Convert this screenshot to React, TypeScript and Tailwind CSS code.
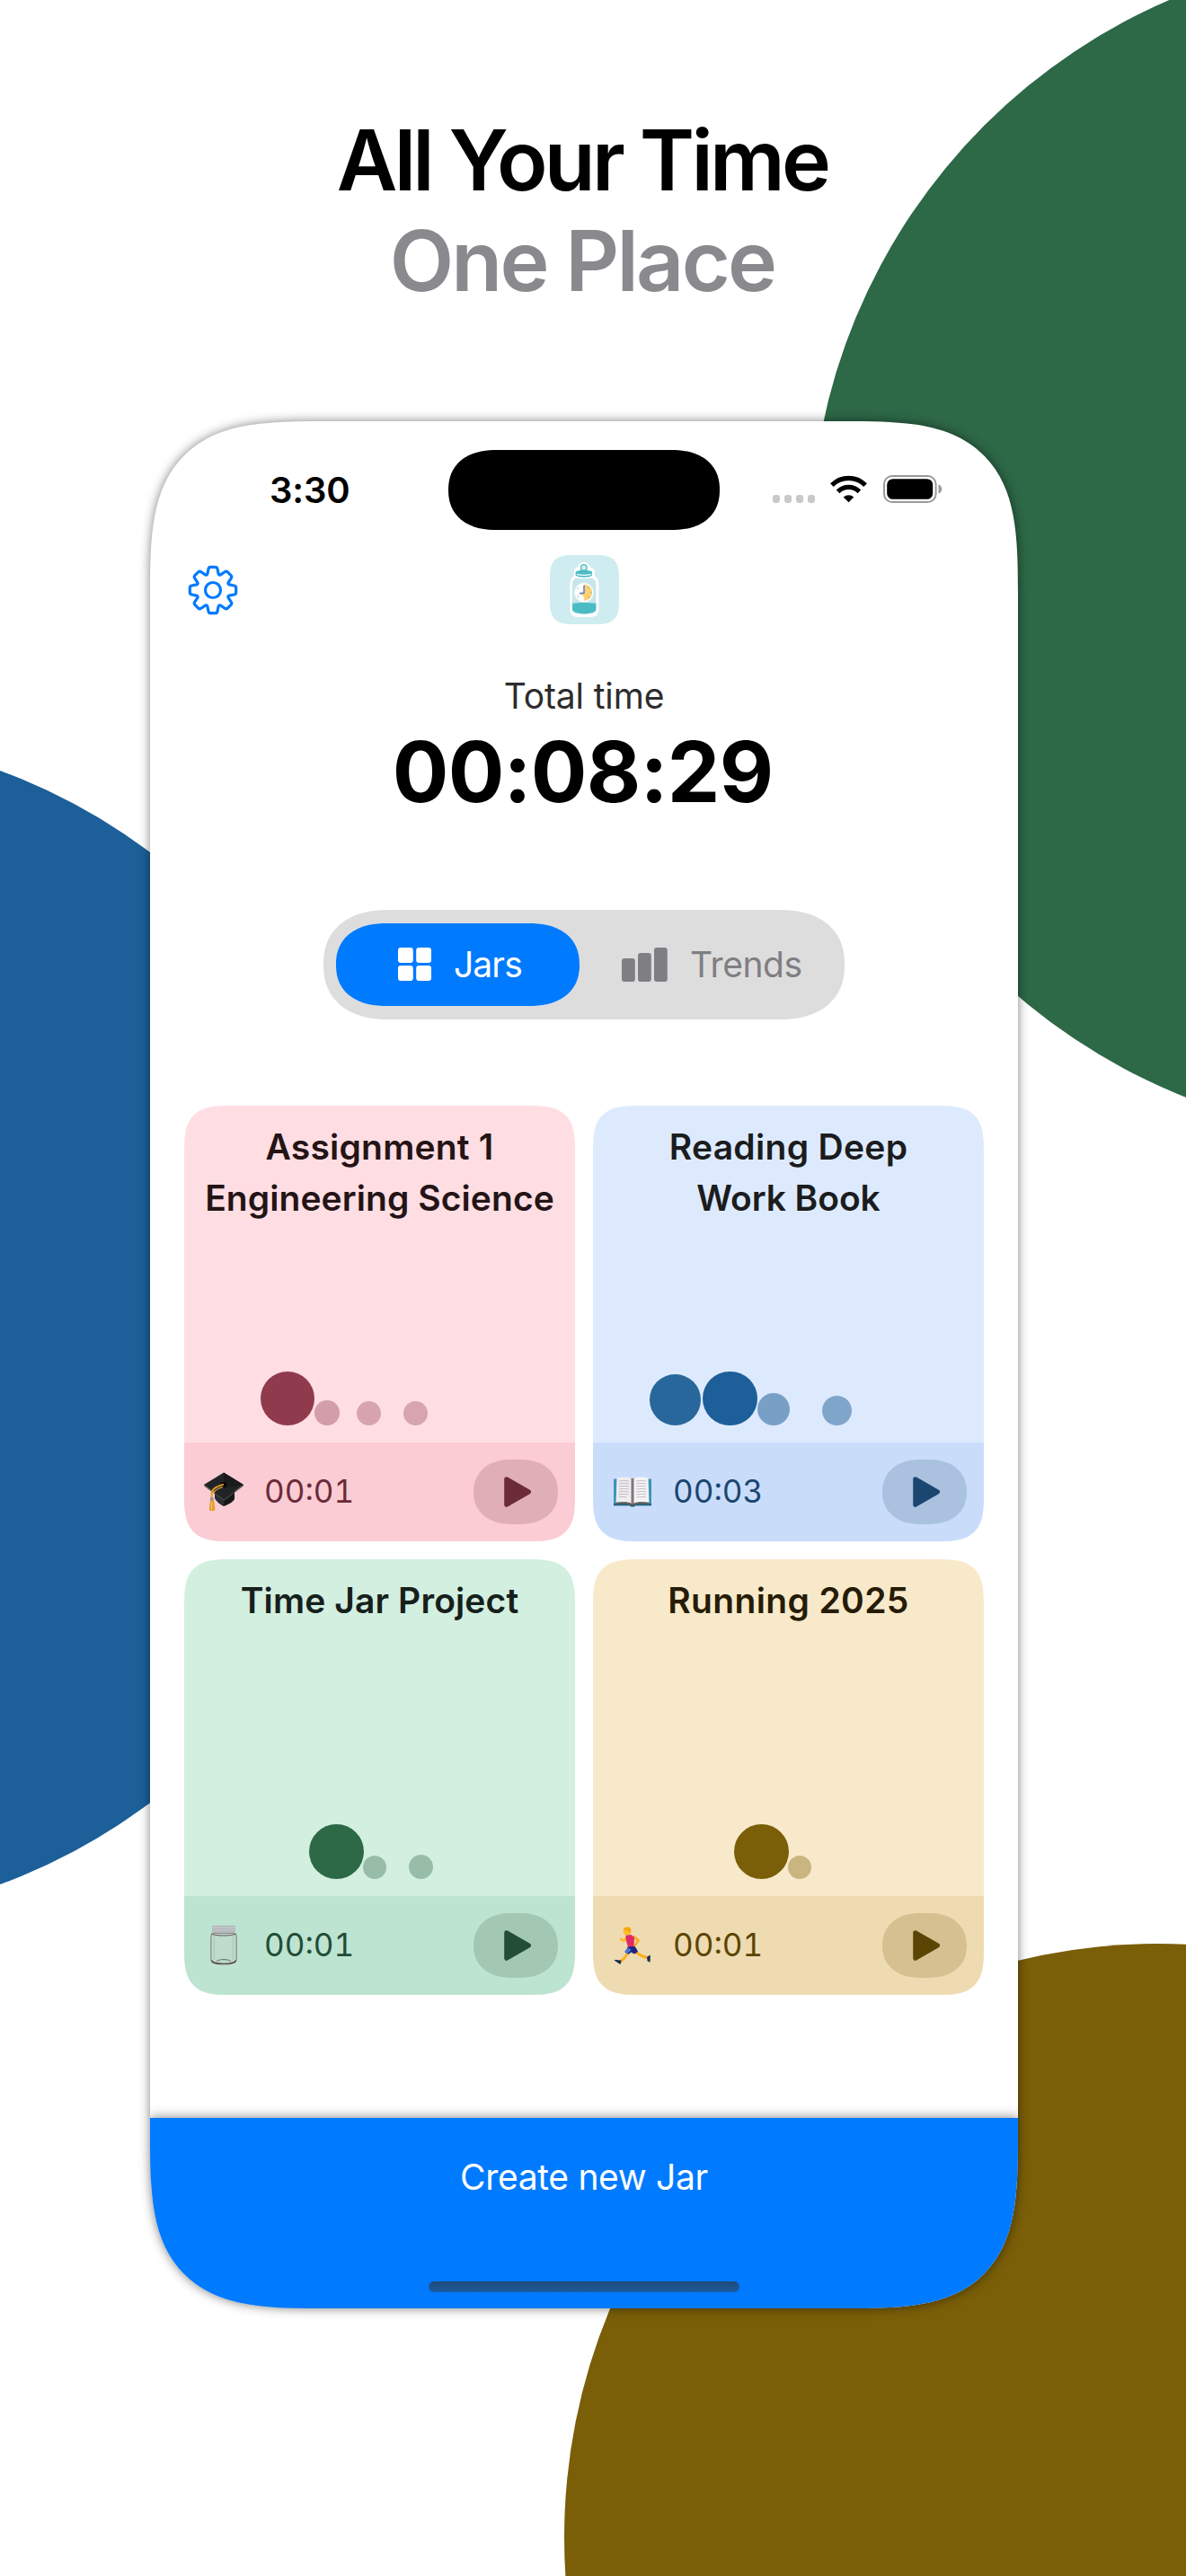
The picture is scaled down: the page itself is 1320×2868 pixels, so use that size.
import React from "react";

/** Outline of an eight-toothed cog, centred on the origin. */
function cogPath() {
  const parts: string[] = [];
  for (let i = 0; i < 8; i++) {
    const a = (i * Math.PI) / 4;
    const p = (x: number, y: number) =>
      `${(x * Math.cos(a) - y * Math.sin(a)).toFixed(2)} ${(x * Math.sin(a) + y * Math.cos(a)).toFixed(2)}`;
    parts.push(
      `${i === 0 ? "M" : "L"}${p(-6.1, -18.2)}`,
      `L${p(-5, -23.6)} Q${p(-4.6, -25.7)} ${p(-2.6, -25.7)}`,
      `L${p(2.6, -25.7)} Q${p(4.6, -25.7)} ${p(5, -23.6)}`,
      `L${p(6.1, -18.2)} Q${p(6.7, -16.2)} ${p(8.6, -17.2)}`
    );
  }
  return parts.join(" ") + "Z";
}

function GearIcon() {
  return (
    <svg width="58" height="58" viewBox="-29 -29 58 58" fill="none" stroke="#007aff" strokeWidth="3.2" strokeLinejoin="round">
      <path d={cogPath()} />
      <circle r="8.5" />
    </svg>
  );
}

function AppLogo() {
  return (
    <svg width="77" height="77" viewBox="0 0 77 77">
      <path d="M37.8 8c3.8 0 6.6 2.4 7 5.6 3 .6 5 2.400 5 5v4.600c3 2.200 4.600 4.600 4.600 8.300V61c0 5-3.600 8-8.600 8H31c-5 0-8.600-3-8.600-8V31.500c0-3.700 1.800-6.100 4.400-8.300v-4.600c0-2.600 1.400-4.400 4-5 .6-3.200 3.400-5.600 7-5.600Z" fill="#fff" />
      <circle cx="37.800" cy="14" r="3.300" fill="#cfecf0" stroke="#4cbcc4" strokeWidth="1.300" />
      <path d="M28.600 18.500c3-2.500 15-2.500 18.400 0v4c-3 3-15 3-18.400 0Z" fill="#4cbcc4" />
      <path d="M30 21.400c4 1.300 12 1.300 15.800 0" stroke="#fff" strokeWidth="1.400" fill="none" />
      <path d="M29 25.600c5 1 13 1 17.800 0 2.800 1.400 4.600 3.500 4.600 6.400v28c0 3.200-2.600 5-5.600 5H30.600c-3 0-5.600-1.800-5.600-5V32c0-2.900 1.400-5 4-6.400Z" fill="#c6e6ea" />
      <path d="M25 54c3-1.400 22-1.400 26.400 0v6.400c0 2.400-6 5-13.200 5S25 62.800 25 60.400Z" fill="#4cbcc4" />
      <circle cx="38" cy="41.700" r="10.600" fill="#fff" />
      <path d="M38 32.600a9.200 9.200 0 0 1 0 18.400v-4.600l-4.500-3.400 4.500-1.600Z" fill="#ffd077" />
      <g fill="#6fb9c6">
        <circle cx="31" cy="37" r=".7" /><circle cx="31.500" cy="46" r=".7" /><circle cx="43" cy="36" r=".7" />
        <circle cx="46" cy="41.500" r=".7" /><circle cx="43.600" cy="47" r=".7" />
      </g>
      <path d="M38 33.800v8.200l-5 .8" fill="none" stroke="#5c7bbf" strokeWidth="1.500" />
    </svg>
  );
}

function WifiIcon() {
  return (
    <svg width="41" height="31" viewBox="0 0 41 31" fill="none" stroke="#000">
      <path d="M1.900 11.100a26.400 26.400 0 0 1 37.200 0" strokeWidth="5.200" />
      <path d="M8.600 18.300a17 17 0 0 1 23.800 0" strokeWidth="5.200" />
      <path d="M20.500 30.300 14.700 24.500a8.300 8.300 0 0 1 11.600 0Z" fill="#000" stroke="none" />
    </svg>
  );
}

function BatteryIcon() {
  return (
    <svg width="66" height="31" viewBox="0 0 66 31">
      <rect x="1" y="1" width="57.600" height="29" rx="9" fill="none" stroke="#999" strokeWidth="2" />
      <rect x="4.200" y="4.200" width="51" height="22.600" rx="6.500" fill="#000" />
      <path d="M61.500 10.500c5 1.600 5 8.400 0 10Z" fill="#999" />
    </svg>
  );
}

function GridIcon() {
  return (
    <svg width="37" height="37" viewBox="0 0 37 37" fill="#fff">
      <rect width="16.800" height="17" rx="3" />
      <rect x="20.200" width="16.800" height="17" rx="3" />
      <rect y="20" width="16.800" height="17" rx="3" />
      <rect x="20.200" y="20" width="16.800" height="17" rx="3" />
    </svg>
  );
}

function BarsIcon() {
  return (
    <svg width="51" height="38" viewBox="0 0 51 38" fill="#7f7e83">
      <rect y="12" width="14.800" height="26" rx="3" />
      <rect x="18" y="6" width="14.800" height="32" rx="3" />
      <rect x="36" width="14.800" height="38" rx="3" />
    </svg>
  );
}

function CapEmoji() {
  return (
    <svg width="44" height="44" viewBox="0 0 44 44">
      <path d="M12 20v9c2 4 6 7 10 9 5-2 10-4 12-8v-11Z" fill="#17181a" />
      <path d="M12 22v6c2 4 5 7 10 9V26Z" fill="#2c2d30" />
      <path d="M22 .4 44 14 22 30.500 0 14Z" fill="#222325" />
      <path d="M0 14 22 30.500 44 14v1.300L22 32 0 15.300Z" fill="#47484a" />
      <path d="M22 .4 44 14 22 18Z" fill="#191a1b" />
      <ellipse cx="22" cy="14" rx="3.600" ry="3" fill="#090909" />
      <path d="M22 13.600C14 16 9.500 18 8.800 22.500L8.500 30" fill="none" stroke="#e29a22" strokeWidth="1.900" />
      <path d="M21 16.500C15 18.500 11 21 10.200 24" fill="none" stroke="#f4b94a" strokeWidth="1.100" />
      <path d="M7 31.500h4l1.400 10.500c-1.600 1.700-5 1.700-6.600 0Z" fill="#e39b25" />
      <path d="M8.600 33v9.500" stroke="#f7c763" strokeWidth="1.200" />
      <ellipse cx="8.800" cy="30" rx="2.100" ry="1.900" fill="#9a938a" />
    </svg>
  );
}

function BookEmoji() {
  return (
    <svg width="44" height="36" viewBox="0 0 44 36">
      <path d="M1 3.500h42v29.700H25c-.6 1.800-5.400 1.800-6 0H1Z" fill="#3d94b8" />
      <path d="M1 31h42v2.200H25c-.6 1.800-5.400 1.800-6 0H1Z" fill="#25647f" />
      <path d="M3.500 29.500h37l-.6 2.200c-6-.8-12-.6-16.600 1h-2.600c-4.600-1.600-10.600-1.800-16.600-1Z" fill="#6d5c52" />
      <path d="M4.500 2.500C10 1 17 1 22 3.200v28C17 28.600 9 28.600 3.600 29.800Z" fill="#efedef" />
      <path d="M39.500 2.500C34 1 27 1 22 3.200v28c5-2.600 13-2.600 18.400-1.400Z" fill="#f5f4f5" />
      <path d="M20.300 2.500 22 3.200l1.700-.7v28l-1.700.9-1.700-.9Z" fill="#9b979a" />
      <path d="M22 3v29" stroke="#5b5759" strokeWidth=".9" />
      <g stroke="#b4b0b8" strokeWidth=".8" fill="none">
        <path d="M7 6q6-1.200 11 0M7 9q6-1.200 11 0M7 12q6-1.200 11 0M6.800 15q6-1.200 11 0M6.800 18q6-1.200 11 0M6.600 21q6-1.200 11 0M6.600 24q5-1.200 9 0" />
        <path d="M26 6q6-1.200 11 0M26 9q6-1.200 11 0M26 12q6-1.200 11 0M26.200 15q6-1.200 11 0M26.200 18q6-1.200 11 0M26.400 21q6-1.200 11 0M26.400 24q6-1.200 11 0" />
      </g>
    </svg>
  );
}

function JarEmoji() {
  return (
    <svg width="44" height="45" viewBox="0 0 44 45">
      <path d="M9.500 9.500C8.300 10.500 7.800 12 7.800 14v24c0 4 2.500 6 14.200 6s14.200-2 14.200-6V14c0-2-.5-3.500-1.700-4.500Z" fill="#bddccb" stroke="#8f8687" strokeWidth="1.200" />
      <path d="M11.500 13v26M32.500 13v26" stroke="#acc6b9" strokeWidth="1.100" />
      <path d="M8.500 10.200c6 2.300 21 2.300 27 0" fill="none" stroke="#6b6463" strokeWidth="1.100" />
      <rect x="9" y=".8" width="26" height="8" rx="2.200" fill="#afb4b9" />
      <path d="M9.600 3.200h24.800M9.600 6h24.800" stroke="#cdd0d4" strokeWidth="1.200" />
      <path d="M8.600 39.500c1.500 5 25.300 5 26.800 0" fill="none" stroke="#4c4345" strokeWidth="1.200" />
      <path d="M14 40.500c3-2.500 13-2.500 16 0" fill="none" stroke="#6b6463" strokeWidth="1" />
    </svg>
  );
}

function RunnerEmoji() {
  return (
    <svg width="44" height="42" viewBox="0 0 44 42" fill="none" strokeLinecap="round" strokeLinejoin="round">
      <path d="M24 27.500 32 32.500 38 34.500" stroke="#fcae1c" strokeWidth="3" />
      <path d="M19 26 13 35 9 38.500" stroke="#fcb321" strokeWidth="3" />
      <path d="M24 11.500 28.500 15.500 24.500 21" stroke="#fbab1b" strokeWidth="2.800" />
      <path d="M16 11 12.500 16 9 14" stroke="#fdbb28" strokeWidth="2.600" />
      <path d="M14.500 9.500 20.500 9l3.500 3-.5 11.500-6 .5c-1.500-5-3.500-9-3-14.500Z" fill="#e12a68" />
      <path d="M16.500 22.500 24.500 22c1.500 2 3 4 3.500 6l-4 2.500-3.500-2-3 2.500-3-3Z" fill="#1e2586" />
      <path d="M17 23l-4 5 3 2.500 4.500-4.500Z" fill="#4a76cf" />
      <circle cx="16" cy="5" r="4.500" fill="#fdbf2d" />
      <path d="M11.800 3.500C12 .5 18-.8 20 2.500c1 2-.5 4-1.500 4.500-1-2-3-3-6.700-3.500Z" fill="#f6a90f" />
      <path d="M2.600 37.500 9 38l-.8 3.200Z" fill="#1b2d55" stroke="#1b2d55" strokeWidth="1.200" />
      <path d="M38.800 34 41.200 32.500 41 39l-2-1.200Z" fill="#1b2d55" stroke="#1b2d55" strokeWidth="1.200" />
    </svg>
  );
}

type Dot = { x: number; r: number; color: string };

type Jar = {
  title: string[];
  spacing: string[];
  time: string;
  emoji: React.ReactNode;
  dots: Dot[];
  card: string;
  footer: string;
  pill: string;
  titleColor: string;
  accent: string;
};

const jars: Jar[] = [
  {
    title: ["Assignment 1", "Engineering Science"],
    spacing: ["tracking-[0.2px]", "tracking-[0.08px]"],
    time: "00:01",
    emoji: <CapEmoji />,
    dots: [
      { x: 115, r: 30.2, color: "#903a4e" },
      { x: 158.700, r: 14.100, color: "#d39da9" },
      { x: 205.700, r: 13.400, color: "#d7a3af" },
      { x: 257.700, r: 13.300, color: "#d7a4b0" },
    ],
    card: "bg-[#ffdee3]",
    footer: "bg-[#fbccd4]",
    pill: "bg-[#e0aeb6]",
    titleColor: "text-[#241416]",
    accent: "text-[#6b2b39]",
  },
  {
    title: ["Reading Deep", "Work Book"],
    spacing: ["tracking-[0.3px]", "tracking-[-0.07px]"],
    time: "00:03",
    emoji: <BookEmoji />,
    dots: [
      { x: 91.300, r: 28.500, color: "#28679c" },
      { x: 152.500, r: 30.200, color: "#1c5f99" },
      { x: 200.800, r: 18, color: "#78a0c7" },
      { x: 271.300, r: 16.600, color: "#80a5cb" },
    ],
    card: "bg-[#ddeafe]",
    footer: "bg-[#c9ddfb]",
    pill: "bg-[#aac2e0]",
    titleColor: "text-[#1b1c1d]",
    accent: "text-[#1b466f]",
  },
  {
    title: ["Time Jar Project"],
    spacing: ["tracking-[0.13px]"],
    time: "00:01",
    emoji: <JarEmoji />,
    dots: [
      { x: 169.500, r: 30.300, color: "#2d6847" },
      { x: 211.800, r: 13.200, color: "#97bda9" },
      { x: 263.700, r: 13.300, color: "#97bda9" },
    ],
    card: "bg-[#d2efe0]",
    footer: "bg-[#bde4d0]",
    pill: "bg-[#a2c8b4]",
    titleColor: "text-[#16201b]",
    accent: "text-[#224d37]",
  },
  {
    title: ["Running 2025"],
    spacing: ["tracking-[0.36px]"],
    time: "00:01",
    emoji: <RunnerEmoji />,
    dots: [
      { x: 187.300, r: 30.300, color: "#7a5e08" },
      { x: 230, r: 13.200, color: "#cab581" },
    ],
    card: "bg-[#f8e9ca]",
    footer: "bg-[#efdbb1]",
    pill: "bg-[#d6c092]",
    titleColor: "text-[#261c06]",
    accent: "text-[#5b4505]",
  },
];

function JarCard({ jar }: { jar: Jar }) {
  return (
    <section className={`flex h-[485.5px] flex-col overflow-hidden rounded-[55px] [corner-shape:superellipse(1.7)] ${jar.card}`}>
      <div className="relative flex-1 pt-[17px]">
        <h2 className={`text-center text-[39px] leading-[57.7px] font-semibold ${jar.titleColor}`}>
          {jar.title.map((line, i) => (
            <span key={line} className={`block whitespace-nowrap ${jar.spacing[i]}`}>{line}</span>
          ))}
        </h2>
        {jar.dots.map((d) => (
          <span
            key={d.x}
            className="absolute bottom-[18.500px] rounded-full"
            style={{ left: d.x - d.r, width: d.r * 2, height: d.r * 2, backgroundColor: d.color }}
          />
        ))}
      </div>
      <footer className={`flex h-[110.5px] items-center pr-[19px] pl-[22px] ${jar.footer} ${jar.accent}`}>
        <div className="flex w-11 justify-center">{jar.emoji}</div>
        <span className="ml-[23px] text-[35px] leading-none tabular-nums">{jar.time}</span>
        <button className={`ml-auto flex h-[72px] w-[94px] items-center justify-center [border-radius:42px_/_36px] [corner-shape:superellipse(1.15)] ${jar.pill}`}>
          <svg width="32" height="36" viewBox="0 0 32 36" fill="currentColor" stroke="currentColor" strokeWidth="5" strokeLinejoin="round" className="ml-1">
            <path d="M3.700 3.700 28.500 18 3.700 32.300Z" />
          </svg>
        </button>
      </footer>
    </section>
  );
}

function StatusBar() {
  return (
    <div className="mt-8 flex h-[89px] items-center pl-[133px]">
      <span className="w-[90px] text-[40px] leading-[48px] font-semibold tracking-[-0.1px] text-black">3:30</span>
      <div className="ml-[109px] h-[89px] w-[302px] bg-black [border-radius:54px_/_44.5px] [corner-shape:superellipse(1.2)]" />
      <div className="mt-5 ml-[59px] flex gap-[5px]">
        {[0, 1, 2, 3].map((i) => (
          <span key={i} className="h-[9px] w-2 rounded-[3px] bg-[#c9c9c9]" />
        ))}
      </div>
      <div className="ml-[17px] -mt-[3px]"><WifiIcon /></div>
      <div className="ml-[18px] -mt-[2px]"><BatteryIcon /></div>
    </div>
  );
}

export default function App() {
  return (
    <main className="relative flex h-[2868px] w-[1320px] flex-col items-center overflow-hidden bg-white pr-5 font-['Inter',sans-serif]">
      <div className="absolute top-[-54.3px] left-[902px] size-[1322px] rounded-full bg-[#2d6847]" />
      <div className="absolute top-[817px] left-[-890px] size-[1322px] rounded-full bg-[#1c5f99]" />
      <div className="absolute top-[2163.5px] left-[628px] size-[1322px] rounded-full bg-[#7a5e08]" />

      <h1 className="relative mt-[122px] flex flex-col pr-1 text-center text-[93px] leading-[112px] font-semibold">
        <span className="tracking-[-3.77px] text-black">All Your Time</span>
        <span className="tracking-[-2.78px] text-[#8a8a8e]">One Place</span>
      </h1>

      <div className="relative mt-[123px] flex h-[2101px] w-[966px] flex-col overflow-hidden rounded-[192px] bg-white shadow-[0_0_12px_rgba(0,0,0,0.5)] [corner-shape:superellipse(1.65)]">
        <StatusBar />

        <header className="mt-7 grid h-[77px] grid-cols-[1fr_auto_1fr] items-center px-[41px]">
          <GearIcon />
          <div className="h-[77px] w-[77px] rounded-[28px] bg-[#cfecf0] [corner-shape:superellipse(1.65)]"><AppLogo /></div>
        </header>

        <div className="mt-14 text-center">
          <p className="text-[39px] leading-[48px] tracking-[-0.12px] text-[#2d2d2d]">Total time</p>
          <p className="mt-1 pr-[3px] text-[93px] leading-[112px] font-bold tracking-[-0.77px] text-black">00:08:29</p>
        </div>

        <nav className="mt-[98px] flex h-[121.5px] w-[580px] items-center self-center bg-[#ddd] px-3.5 text-[39px] leading-[48px] [border-radius:73px_/_60.7px] [corner-shape:superellipse(1.2)]">
          <button className="flex h-[92px] w-[271px] items-center gap-[25px] bg-[#007aff] pl-[69px] tracking-[-0.9px] text-white [border-radius:56px_/_46px] [corner-shape:superellipse(1.2)]">
            <GridIcon />
            Jars
          </button>
          <button className="ml-[47px] flex items-center gap-[25px] tracking-[-0.42px] text-[#7f7e83]">
            <BarsIcon />
            Trends
          </button>
        </nav>

        <div className="mt-24 grid grid-cols-2 gap-x-5 gap-y-[19.5px] px-[38px]">
          {jars.map((jar) => (
            <JarCard key={jar.title[0]} jar={jar} />
          ))}
        </div>

        <div className="mt-auto flex h-[212px] flex-col items-center bg-[#007aff] pt-[42px] shadow-[0_0_12px_rgba(0,0,0,0.5)]">
          <button className="text-[39px] leading-[48px] tracking-[-0.32px] text-white">Create new Jar</button>
          <div className="mt-[92px] h-3 w-[346px] rounded-full bg-linear-to-b from-[#1f4a7a] to-[#1b5a9f]" />
        </div>
      </div>
    </main>
  );
}
